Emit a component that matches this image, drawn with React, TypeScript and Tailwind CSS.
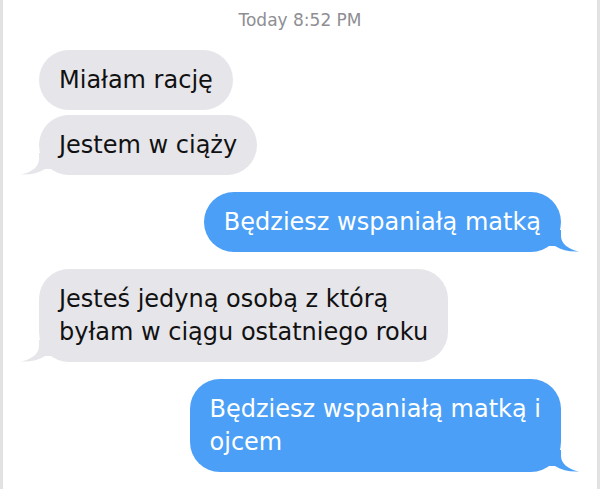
import React from "react";

type Msg = { id: number; from: "them" | "me"; lines: string[]; tail?: boolean; gap: string };

const messages: Msg[] = [
  { id: 1, from: "them", lines: ["Miałam rację"], gap: "mt-0" },
  { id: 2, from: "them", lines: ["Jestem w ciąży"], tail: true, gap: "mt-[5px]" },
  { id: 3, from: "me", lines: ["Będziesz wspaniałą matką"], tail: true, gap: "mt-[17px]" },
  {
    id: 4,
    from: "them",
    lines: ["Jesteś jedyną osobą z którą", "byłam w ciągu ostatniego roku"],
    tail: true,
    gap: "mt-[17px]",
  },
  { id: 5, from: "me", lines: ["Będziesz wspaniałą matką i", "ojcem"], tail: true, gap: "mt-[17px]" },
];

const Tail = ({ side }: { side: "left" | "right" }) => {
  if (side === "left") {
    return (
      <svg className="absolute bottom-0 left-[-18px]" width="30" height="22" viewBox="0 0 30 22">
        <path d="M18 0 L18 6 C18 13 12 19 0 21.5 C9 22 17 20.5 24 16 L30 16 L30 0 Z" fill="#e5e5ea" />
      </svg>
    );
  }
  return (
    <svg className="absolute bottom-0 right-[-18px]" width="30" height="22" viewBox="0 0 30 22">
      <path d="M12 0 L12 6 C12 13 18 19 30 21.5 C21 22 13 20.5 6 16 L0 16 L0 0 Z" fill="#4b9ff6" />
    </svg>
  );
};

const App = () => {
  return (
    <div
      className="w-[600px] h-[489px] bg-white border-x-[3px] border-[#e2e2e2] overflow-hidden"
      style={{ fontFamily: "'DejaVu Sans', Verdana, sans-serif" }}
    >
      {/* Timestamp */}
      <div className="pt-[9px] text-center text-[17px] leading-[22px] text-[#8e8e93]">
        Today 8:52 PM
      </div>

      {/* Conversation */}
      <div className="flex flex-col px-[36px] pt-[19px]">
        {messages.map((m) => (
          <div
            key={m.id}
            className={`flex ${m.gap} ${m.from === "me" ? "justify-end" : "justify-start"}`}
          >
            <div
              className={`relative rounded-[30px] px-[20px] py-[13.5px] text-[24px] leading-[33px] whitespace-nowrap ${
                m.from === "me" ? "bg-[#4b9ff6] text-white" : "bg-[#e5e5ea] text-[#111111]"
              }`}
            >
              {m.tail && <Tail side={m.from === "me" ? "right" : "left"} />}
              {m.lines.map((line, i) => (
                <div key={i} className="relative">
                  {line}
                </div>
              ))}
            </div>
          </div>
        ))}
      </div>
    </div>
  );
};

export default App;
